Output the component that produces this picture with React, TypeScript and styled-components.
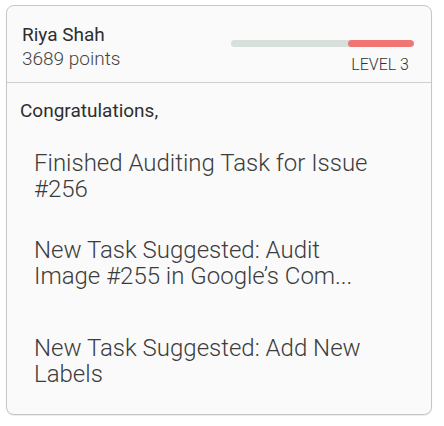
import styled, { createGlobalStyle } from "styled-components";

const GlobalStyle = createGlobalStyle`
  body {
    margin: 0;
    background: #ffffff;
    font-family: Roboto, "Noto Sans", sans-serif;
  }
`;

const Page = styled.div`
  padding: 5px 12px 10px 6px;
`;

const Card = styled.div`
  width: 426px;
  height: 410px;
  box-sizing: border-box;
  background: #fafafa;
  border: 1px solid #c6c6c6;
  border-radius: 8px;
  box-shadow: 0 1px 1px rgba(0, 0, 0, 0.08);
  overflow: hidden;
`;

const Header = styled.div`
  display: flex;
  justify-content: space-between;
  align-items: flex-start;
  height: 77px;
  box-sizing: border-box;
  padding: 17px 17px 0 15px;
  border-bottom: 1px solid #cfcfcf;
`;

const Name = styled.div`
  font-size: 19px;
  line-height: 24px;
  font-weight: 400;
  color: #2e2e2e;
`;

const Points = styled.div`
  font-size: 19px;
  line-height: 24px;
  font-weight: 300;
  color: #444;
`;

const LevelBox = styled.div`
  display: flex;
  flex-direction: column;
  align-items: flex-end;
  padding-top: 17px;
`;

const Track = styled.div`
  width: 183px;
  height: 7px;
  border-radius: 4px;
  background: #d7e0db;
  display: flex;
  justify-content: flex-end;
  overflow: hidden;
`;

const Fill = styled.div`
  height: 100%;
  background: #f07673;
  border-radius: 4px;
`;

const Level = styled.div`
  margin-top: 8px;
  margin-right: 5px;
  font-size: 16px;
  line-height: 20px;
  font-weight: 300;
  color: #333;
`;

const Body = styled.div`
  padding: 16px 0 0 13px;
`;

const Greeting = styled.div`
  font-size: 19px;
  line-height: 24px;
  font-weight: 400;
  color: #2e2e2e;
`;

const Item = styled.div<{ $space: number }>`
  width: 341px;
  margin-top: ${(p) => p.$space}px;
  margin-left: 14px;
  font-size: 24px;
  line-height: 26px;
  font-weight: 300;
  color: #3c3c3c;
`;

const items = [
  { text: "Finished Auditing Task for Issue #256", space: 27 },
  { text: "New Task Suggested: Audit Image #255 in Google’s Com...", space: 35 },
  { text: "New Task Suggested: Add New Labels", space: 46 },
];

export default function App() {
  return (
    <>
      <GlobalStyle />
      <Page>
        <Card>
          <Header>
            <div>
              <Name>Riya Shah</Name>
              <Points>3689 points</Points>
            </div>
            <LevelBox>
              <Track>
                <Fill style={{ width: "36%" }} />
              </Track>
              <Level>LEVEL 3</Level>
            </LevelBox>
          </Header>
          <Body>
            <Greeting>Congratulations,</Greeting>
            {items.map((it) => (
              <Item key={it.text} $space={it.space}>
                {it.text}
              </Item>
            ))}
          </Body>
        </Card>
      </Page>
    </>
  );
}
